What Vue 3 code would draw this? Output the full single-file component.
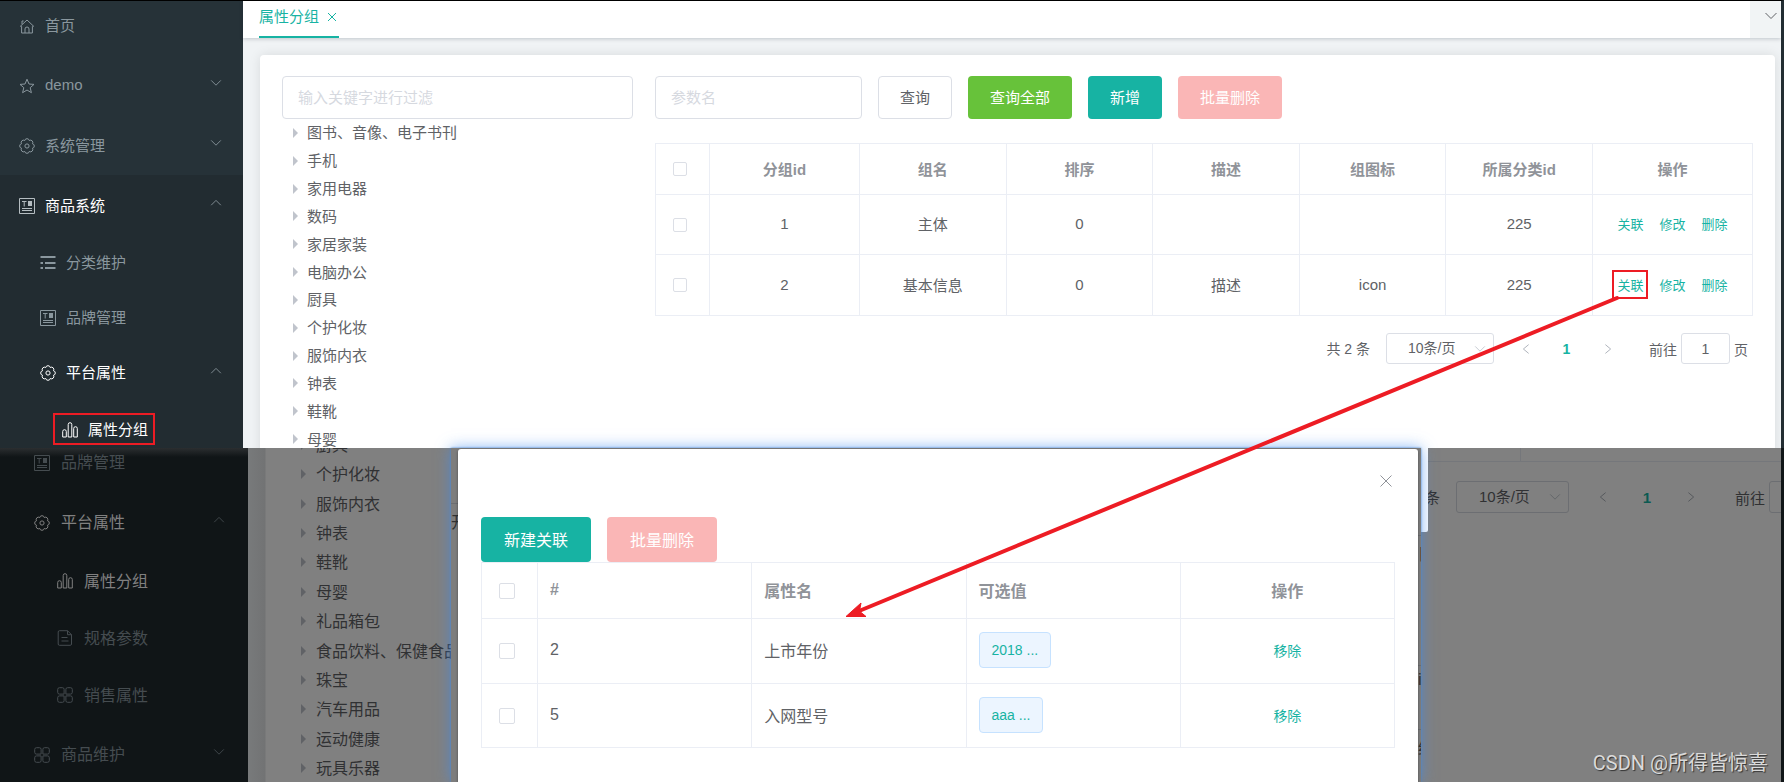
<script setup>
import { ref } from 'vue'

const icons = {
  home: 'M1 8.6 8 2l7 6.6M2.6 8.2V15h10.8V8.2M6 15v-4a2 2 0 0 1 4 0v4M3 6.2V3h1.6',
  star: 'M8 1.2 10 6l5 .4-3.8 3.3 1.2 5L8 12l-4.4 2.7 1.2-5L1 6.4 6 6z',
  gear: 'M13.45 10.26A2.3 2.3 0 0 1 10.26 13.45 2.3 2.3 0 0 1 5.74 13.45 2.3 2.3 0 0 1 2.55 10.26 2.3 2.3 0 0 1 2.55 5.74 2.3 2.3 0 0 1 5.74 2.55 2.3 2.3 0 0 1 10.26 2.55 2.3 2.3 0 0 1 13.45 5.74 2.3 2.3 0 0 1 13.45 10.26zM10.1 8a2.1 2.1 0 1 1-4.2 0 2.1 2.1 0 0 1 4.2 0z',
  news: 'M.5.5h15v15H.5zM3 3.5h4.5M5.2 3.5v5M9 3.5h4M9 4.5h4M9 5.5h4M9 6.5h4M9 7.5h4M3 10.5h10M3 12.5h10',
  list: 'M.5 2.5h15M.5 7.5H3M5 7.5h10.5M.5 8.5H3M5 8.5h10.5M.5 13.5H3M5 13.5h10.5M.5 1.5h15M.5 12.5H3M5 12.5h10.5',
  bars: 'M.7 9.5a1.7 1.7 0 0 1 3.6 0V15H.7zM6.2 2.5a1.8 1.8 0 0 1 3.6 0V15H6.2zM11.7 6.5a1.8 1.8 0 0 1 3.6 0V15h-3.6z',
  doc: 'M2.5.7H10.5L14.5 4.7V14a1.3 1.3 0 0 1-1.3 1.3H2.5A1.3 1.3 0 0 1 1.2 14V2A1.3 1.3 0 0 1 2.5.7zM10.5.7V4.7H14.5M4.5 7.5h6M4.5 11h7',
  grid: 'M2.5.7H5.5A1.6 1.6 0 0 1 7.1 2.3V7.1H2.5A1.8 1.8 0 0 1 .7 5.3V2.5A1.8 1.8 0 0 1 2.5.7zM10.5.7H13.5A1.8 1.8 0 0 1 15.3 2.5V5.3A1.8 1.8 0 0 1 13.5 7.1H8.9V2.3A1.6 1.6 0 0 1 10.5.7zM2.5 8.9H7.1V13.7A1.6 1.6 0 0 1 5.5 15.3H2.5A1.8 1.8 0 0 1 .7 13.5V10.7A1.8 1.8 0 0 1 2.5 8.9zM8.9 8.9H13.5A1.8 1.8 0 0 1 15.3 10.7V13.5A1.8 1.8 0 0 1 13.5 15.3H10.5A1.6 1.6 0 0 1 8.9 13.7z',
  down: 'M2.5 5 8 10.5 13.5 5',
  up: 'M2.5 10.5 8 5l5.5 5.5'
}

const menu = [
  { text: '首页', icon: 'home' },
  { text: 'demo', icon: 'star', arrow: 'down' },
  { text: '系统管理', icon: 'gear', arrow: 'down' },
  { text: '商品系统', icon: 'news', arrow: 'up', open: true, on: true },
  { text: '分类维护', icon: 'list', level: 2 },
  { text: '品牌管理', icon: 'news', level: 2 },
  { text: '平台属性', icon: 'gear', arrow: 'up', level: 2, on: true },
  { text: '属性分组', icon: 'bars', level: 3, on: true }
]
const dimMenu = [
  { text: '品牌管理', icon: 'news' },
  { text: '平台属性', icon: 'gear', arrow: 'up', on: true },
  { text: '属性分组', icon: 'bars', level: 2, on: true },
  { text: '规格参数', icon: 'doc', level: 2 },
  { text: '销售属性', icon: 'grid', level: 2 },
  { text: '商品维护', icon: 'grid', arrow: 'down' }
]
const tree = ['图书、音像、电子书刊', '手机', '家用电器', '数码', '家居家装', '电脑办公', '厨具', '个护化妆', '服饰内衣', '钟表', '鞋靴', '母婴']
const dimTree = ['厨具', '个护化妆', '服饰内衣', '钟表', '鞋靴', '母婴', '礼品箱包', '食品饮料、保健食品', '珠宝', '汽车用品', '运动健康', '玩具乐器']
const heads = ['分组id', '组名', '排序', '描述', '组图标', '所属分类id', '操作']
const groups = [
  ['1', '主体', '0', '', '', '225'],
  ['2', '基本信息', '0', '描述', 'icon', '225']
]
const attrs = [
  { id: '2', name: '上市年份', value: '2018 ...' },
  { id: '5', name: '入网型号', value: 'aaa ...' }
]
const filter = ref('')
const key = ref('')
const page = ref('1')
</script>

<template>
  <div class="page">
    <section class="scene top">
      <nav class="side">
        <a v-for="m in menu" :key="m.text" href="#" class="item" :class="['l' + (m.level || 1), { on: m.on, open: m.open || m.level }]">
          <span class="label" :class="{ marked: m.level === 3 }">
            <svg class="ico" viewBox="0 0 16 16"><path :d="icons[m.icon]" /></svg>{{ m.text }}
          </span>
          <svg v-if="m.arrow" class="arrow" viewBox="0 0 16 16"><path :d="icons[m.arrow]" /></svg>
        </a>
      </nav>
      <div class="main">
        <header class="tabs">
          <a href="#" class="tab">属性分组<svg viewBox="0 0 10 10"><path d="M1 1l8 8M9 1 1 9" /></svg></a>
          <button class="more" aria-label="更多"><svg class="arrow" viewBox="0 0 16 16"><path :d="icons.down" /></svg></button>
        </header>
        <div class="card">
          <div class="left">
            <input v-model="filter" class="box" placeholder="输入关键字进行过滤" aria-label="过滤">
            <ul class="tree">
              <li v-for="t in tree" :key="t"><i class="caret"></i>{{ t }}</li>
            </ul>
          </div>
          <div class="right">
            <form class="bar" @submit.prevent>
              <input v-model="key" class="box" placeholder="参数名" aria-label="参数名">
              <button class="btn plain">查询</button>
              <button class="btn green">查询全部</button>
              <button class="btn teal">新增</button>
              <button class="btn pink" disabled>批量删除</button>
            </form>
            <table class="grid">
              <colgroup><col class="c-check"><col class="c-id"><col><col><col><col><col><col class="c-op"></colgroup>
              <thead>
                <tr><th><input type="checkbox" aria-label="全选"></th><th v-for="h in heads" :key="h">{{ h }}</th></tr>
              </thead>
              <tbody>
                <tr v-for="(g, i) in groups" :key="i">
                  <td><input type="checkbox" :aria-label="'选择 ' + g[0]"></td>
                  <td v-for="(c, j) in g" :key="j">{{ c }}</td>
                  <td>
                    <div class="ops">
                      <button class="link" :class="{ boxed: i === 1 }">关联</button>
                      <button class="link">修改</button>
                      <button class="link">删除</button>
                    </div>
                  </td>
                </tr>
              </tbody>
            </table>
            <div class="pager">
              <span>共 2 条</span>
              <span class="size">
                <select aria-label="每页条数"><option>10条/页</option></select>
                <svg class="arrow" viewBox="0 0 16 16"><path :d="icons.down" /></svg>
              </span>
              <span class="nums">
                <button aria-label="上一页"><svg viewBox="0 0 16 16"><path d="M11 3 5 8l6 5" /></svg></button>
                <button class="cur">1</button>
                <button aria-label="下一页"><svg viewBox="0 0 16 16"><path d="M5 3l6 5-6 5" /></svg></button>
              </span>
              <label class="jump">前往<input v-model="page" aria-label="页码">页</label>
            </div>
          </div>
        </div>
      </div>
    </section>

    <section class="scene bottom">
      <nav class="side">
        <a v-for="m in dimMenu" :key="m.text" href="#" class="item" :class="['l' + (m.level || 1), { on: m.on }]">
          <span class="label">
            <svg class="ico" viewBox="0 0 16 16"><path :d="icons[m.icon]" /></svg>{{ m.text }}
          </span>
          <svg v-if="m.arrow" class="arrow" viewBox="0 0 16 16"><path :d="icons[m.arrow]" /></svg>
        </a>
      </nav>
      <div class="main">
        <ul class="tree">
          <li v-for="t in dimTree" :key="t"><i class="caret"></i>{{ t }}</li>
        </ul>
        <div class="rest">
          <div class="lastrow"></div>
          <div class="pager">
            <span>共 2 条</span>
            <span class="size">
              <select aria-label="每页条数"><option>10条/页</option></select>
              <svg class="arrow" viewBox="0 0 16 16"><path :d="icons.down" /></svg>
            </span>
            <span class="nums">
              <button aria-label="上一页"><svg viewBox="0 0 16 16"><path d="M11 3 5 8l6 5" /></svg></button>
              <button class="cur">1</button>
              <button aria-label="下一页"><svg viewBox="0 0 16 16"><path d="M5 3l6 5-6 5" /></svg></button>
            </span>
            <label class="jump">前往<input v-model="page" aria-label="页码">页</label>
          </div>
        </div>
      </div>

      <div class="scrap"></div>
      <div class="frame">
        <div class="sliver"><span>开</span></div>
        <div class="dialog" role="dialog" aria-label="关联属性">
          <button class="close" aria-label="关闭"><svg viewBox="0 0 12 12"><path d="M.5.5l11 11M11.5.5l-11 11" /></svg></button>
          <div class="acts">
            <button class="btn teal">新建关联</button>
            <button class="btn pink" disabled>批量删除</button>
          </div>
          <table class="grid">
            <colgroup><col class="c-check"><col><col><col><col></colgroup>
            <thead>
              <tr><th><input type="checkbox" aria-label="全选"></th><th>#</th><th>属性名</th><th>可选值</th><th class="mid">操作</th></tr>
            </thead>
            <tbody>
              <tr v-for="a in attrs" :key="a.id">
                <td><input type="checkbox" :aria-label="'选择 ' + a.id"></td>
                <td>{{ a.id }}</td>
                <td>{{ a.name }}</td>
                <td><span class="tag">{{ a.value }}</span></td>
                <td class="mid"><button class="link">移除</button></td>
              </tr>
            </tbody>
          </table>
        </div>
        <div class="sliver end"><span>目</span><span>i</span><span>终</span></div>
      </div>
      <div class="mark">CSDN @所得皆惊喜</div>
    </section>

    <svg class="pointer" viewBox="0 0 1784 782" preserveAspectRatio="none">
      <path class="shaft" d="M1617 298 859 611" />
      <path class="head" d="M846 616.500 861 603 859.500 611.200 866 616.500z" />
    </svg>
  </div>
</template>

<style>
body { background: #fff; overflow: hidden; }
</style>

<style scoped>
.page {
  position: relative;
  display: grid;
  grid-template-rows: minmax(0, 448fr) minmax(0, 334fr);
  height: 100vh;
  overflow: hidden;
  font-family: "Liberation Sans", "Noto Sans CJK SC", sans-serif;
  font-size: 15px;
  color: #606266;
}
.page * { box-sizing: border-box; }
button, input, select { font: inherit; color: inherit; margin: 0; }
button { border: 0; padding: 0; background: none; cursor: pointer; }
svg { fill: none; stroke: currentColor; flex: none; }
ul { list-style: none; margin: 0; padding: 0; }
.scene { position: relative; display: flex; min-width: 0; }
.main { flex: 1; min-width: 0; }

/* upper window */
.top { overflow: hidden; border-top: 1px solid #000; border-right: 3px solid #222d32; }
.side { flex: none; overflow: hidden; }
.item { display: flex; align-items: center; justify-content: space-between; text-decoration: none; white-space: nowrap; }
.label { display: flex; align-items: center; gap: 10px; padding-bottom: 2px; }
.ico { width: 16px; height: 16px; margin-top: 3px; }
.arrow { width: 14px; height: 14px; }
.top .side { width: 243px; background: #263238; }
.top .item { height: 60px; padding: 0 20px 0 19px; color: #8a979e; background: #263238; }
.top .item:first-child { margin-top: -6px; }
.top .item.open { background: #222c31; }
.top .item.l2, .top .item.l3 { height: 55px; }
.top .item.l3 { height: 57px; }
.top .item.l2 { padding-left: 40px; }
.top .item.l3 { padding-left: 53px; }
.top .item.on .label { color: #fff; }
.top .item.on.l1 .ico { color: #b5bdc1; }
.top .arrow { margin-bottom: 4px; }
.marked { border: 2px solid #ed1c24; height: 32px; padding: 0 5px 0 7px; }

.top .main { background: #f0f3f5; }
.tabs { position: relative; display: flex; justify-content: space-between; height: 37px; padding-left: 16px; background: #fff; box-shadow: 0 1px 4px rgba(0, 21, 41, .2); }
.tab { display: flex; align-items: center; gap: 8px; width: 80px; padding-bottom: 7px; border-bottom: 2px solid #17b3a3; color: #17b3a3; text-decoration: none; white-space: nowrap; }
.tab svg { width: 10px; height: 10px; margin-top: 3px; }
.more { display: flex; align-items: center; justify-content: flex-end; width: 31px; padding: 0 2px 7px 0; background: #f1f4f5; }
.more .arrow { width: 16px; height: 16px; margin: 0; }
.card { display: flex; gap: 22px; min-height: 480px; margin: 17px 6px 0 17px; padding: 21px 22px; background: #fff; border-radius: 4px; box-shadow: 0 0 12px rgba(0, 0, 0, .1); }
.left { flex: 351 1 0; min-width: 0; }
.right { flex: 1098 1 0; min-width: 0; }
.box { width: 100%; height: 43px; padding: 0 15px 1px; border: 1px solid #dcdfe6; border-radius: 4px; background: #fff; outline: 0; }
.box::placeholder { color: #d6d9df; opacity: 1; }
.tree { display: grid; grid-auto-rows: 1fr; white-space: nowrap; }
.tree li { display: flex; align-items: center; padding-bottom: 2px; }
.caret { margin-top: 2px; border: 5px solid transparent; border-left-color: #c0c4cc; border-right-width: 0; }
.top .tree { height: 334px; padding-left: 11px; }
.top .tree li { gap: 9px; }
.bar { display: flex; gap: 16px; }
.bar .box { width: 207px; }
.btn { height: 43px; padding: 0 22px 2px; border-radius: 4px; color: #fff; }
.plain { padding: 0 21px 2px; border: 1px solid #dcdfe6; color: #606266; }
.green { background: #67c23a; }
.teal { background: #17b3a3; }
.pink { background: #fab6b6; }
.grid { width: 100%; border-collapse: collapse; table-layout: fixed; }
.grid th, .grid td { border: 1px solid #ebeef5; padding: 0 0 2px; text-align: center; }
.grid th { font-weight: 700; color: #909399; }
.grid input { appearance: none; display: block; width: 14px; height: 14px; margin: 0 auto; border: 1px solid #dcdfe6; border-radius: 2px; background: #fff; }
.grid th:first-child, .grid td:first-child { padding: 0 5px 0 0; }
.top .grid { margin-top: 24px; }
.top .grid .c-check { width: 54px; }
.top .grid .c-id { width: 150px; }
.top .grid .c-op { width: 160px; }
.top .grid th { height: 51px; }
.top .grid td { height: 60px; }
.top .grid tr:last-child td { height: 61px; }
.link { color: #17b3a3; font-size: 13px; }
.ops { display: flex; justify-content: center; gap: 16px; }
.boxed { outline: 2px solid #ed1c24; outline-offset: 3px; }

.pager { display: flex; align-items: center; justify-content: flex-end; white-space: nowrap; font-size: 14px; }
.pager > span:first-child { padding-bottom: 2px; }
.size { position: relative; }
.size select { width: 100%; height: 31px; padding: 0 0 1px 21px; appearance: none; border: 1px solid #dcdfe6; border-radius: 3px; background: none; }
.size .arrow { position: absolute; right: 7px; top: 9px; margin: 0; color: #c0c4cc; pointer-events: none; }
.nums { display: flex; color: #a4a9b2; }
.nums button { display: flex; align-items: center; justify-content: center; }
.nums svg { width: 14px; height: 14px; }
.nums .cur { color: #17b3a3; font-weight: 700; }
.jump { display: flex; align-items: center; gap: 4px; }
.jump input { width: 49px; height: 31px; padding: 0; text-align: center; border: 1px solid #dcdfe6; border-radius: 3px; background: none; }
.top .pager { margin-top: 17px; padding-right: 5px; }
.top .size { width: 108px; margin: 0 11px 0 16px; }
.top .nums button { width: 41px; }
.top .jump { margin-left: 21px; }

/* lower window under its mask */
.bottom { font-size: 16px; color: #303133; border-right: 3px solid #101517; background: #808080; }
.bottom .side { width: 248px; background: linear-gradient(#2b2e30, #101517 9px); }
.bottom .item { height: 60px; padding: 0 22px 0 34px; color: #454c50; }
.bottom .item:first-child { margin-top: -16px; }
.bottom .item.l2 { height: 57px; padding-left: 57px; }
.bottom .item.on { color: #808080; }
.bottom .item .arrow { color: #454c50; margin-bottom: 4px; }
.bottom .item:last-child { height: 62px; }
.bottom .label { gap: 11px; }
.bottom .main { display: flex; overflow: hidden; background: linear-gradient(90deg, #787a7b, #727374 17px, #808080 18px); }
.bottom .tree { flex: none; width: 203px; height: 353px; margin-top: -18px; padding-left: 53px; overflow: hidden; }
.bottom .tree li { gap: 10px; }
.bottom .caret { border-left-color: #606266; }
.rest { flex: 1; min-width: 0; }
.lastrow { height: 14px; border-bottom: 1px solid #75777b; background: linear-gradient(#75777b, #75777b) right 260px top / 1px 100% no-repeat; }
.bottom .pager { margin: 19px -58px 0 0; font-size: 15px; }
.bottom .size { width: 113px; margin: 0 12px 0 16px; }
.bottom .size select { height: 32px; padding-left: 22px; border-color: #6c6e72; }
.bottom .size .arrow { color: #5f6266; }
.bottom .nums { color: #505358; }
.bottom .nums .cur { color: #0b5a52; }
.bottom .nums button { width: 44px; }
.bottom .jump { margin-left: 22px; }
.bottom .jump input { width: 51px; height: 32px; border-color: #6c6e72; }

.frame { position: absolute; inset: 0 360px 0 451px; display: flex; padding-top: 1px; background: #7d7d7d; box-shadow: 0 0 14px rgba(64, 140, 240, .65), 0 0 2px #4a84c4; clip-path: inset(-20px -20px 0 -20px); }
.scrap { position: absolute; top: 0; right: 353px; width: 10px; height: 84px; border-radius: 0 0 2px 0; background: #fff; }
.sliver { flex: none; width: 7px; padding-top: 10px; overflow: hidden; }
.sliver span { display: block; padding-top: 5px; border-top: 1px solid #6c6e72; }
.sliver span:first-child { margin-top: 44px; }
.sliver.end { display: flex; flex-direction: column; gap: 40px; width: 3px; padding-top: 42px; }
.sliver.end span:nth-child(2) { margin-top: 60px; }
.dialog { position: relative; flex: 1; min-width: 0; padding: 68px 23px 0; border-radius: 3px 3px 0 0; background: #fff; box-shadow: 0 1px 3px rgba(0, 0, 0, .4); color: #606266; }
.close { position: absolute; top: 26px; right: 26px; display: flex; color: #909399; }
.close svg { width: 12px; height: 12px; }
.acts { display: flex; gap: 16px; }
.acts .btn { height: 45px; padding: 0 23px 2px; }
.dialog .grid .c-check { width: 56px; }
.dialog .grid th, .dialog .grid td { text-align: left; padding-left: 12px; }
.dialog .grid th:first-child, .dialog .grid td:first-child { padding: 0 5px 0 0; }
.dialog .grid .mid { padding-left: 0; text-align: center; }
.dialog .grid th { height: 56px; }
.dialog .grid td { height: 65px; }
.dialog .grid tr:last-child td { height: 64px; }
.dialog .grid tr input { width: 16px; height: 16px; }
.dialog .link { font-size: 14px; }
.tag { display: inline-block; height: 36px; padding: 0 12px; line-height: 34px; font-size: 14px; border: 1px solid #c6e2ff; border-radius: 4px; background: #ecf5ff; color: #17b3a3; vertical-align: middle; }
.mark { position: absolute; right: 13px; bottom: 4px; font: 20px/30px Roboto, "Noto Sans CJK SC", sans-serif; color: #dadada; text-shadow: 1px 1px 1px #333; white-space: nowrap; }

.pointer { position: absolute; inset: 0; width: 100%; height: 100%; pointer-events: none; }
.shaft { stroke: #ed1c24; stroke-width: 4; stroke-linecap: round; }
.head { fill: #ed1c24; stroke: #ed1c24; }
</style>
